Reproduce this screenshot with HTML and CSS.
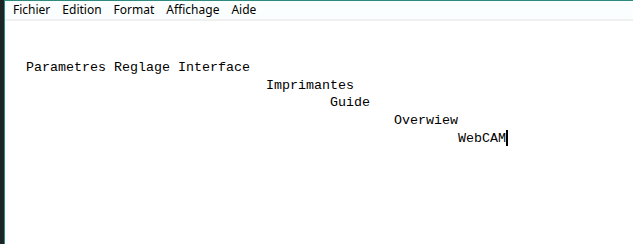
FILE: index.html
```html
<!DOCTYPE html>
<html lang="fr">
  <head>
    <meta charset="UTF-8" />
    <meta name="viewport" content="width=device-width, initial-scale=1.0" />
    <title>Sans titre - Bloc-notes</title>
    <link rel="stylesheet" href="styles.css">
  </head>
  <body>
    <div class="fenetre">
      <!-- Barre de menu -->
      <ul class="menu">
        <li>Fichier</li>
        <li>Edition</li>
        <li>Format</li>
        <li>Affichage</li>
        <li>Aide</li>
      </ul>

      <!-- Zone de texte -->
      <div class="editeur">
<pre class="texte">Parametres Reglage Interface
                              Imprimantes
                                      Guide
                                              Overwiew
                                                      WebCAM<span class="curseur"></span></pre>
      </div>
    </div>
  </body>
</html>
```

FILE: styles.css
```css
* {
  margin: 0;
  padding: 0;
  box-sizing: border-box;
}

body {
  background: #fff;
  height: 100vh;
  overflow: hidden;
}

.fenetre {
  height: 100%;
  border-left: 4px solid #1c2526; /* bande sombre a gauche */
  display: flex;
  flex-direction: column;
  position: relative;
}

.fenetre::before {
  content: "";
  position: absolute;
  top: 0;
  bottom: 0;
  left: 0;
  width: 1px;
  background: #2f8a80;
}

.menu {
  list-style: none;
  display: flex;
  height: 21px;
  padding-left: 3px;
  border-top: 1px solid #2f8a80;
  border-bottom: 2px solid #f0f0f0;
  background: #fbfefe;
  font-family: "Noto Sans", "Open Sans", sans-serif;
  font-size: 12px;
  line-height: 17px;
  color: #000;
}

.menu li {
  padding: 0 6px;
}

.editeur {
  flex: 1;
  padding: 38px 0 0 22px;
}

.texte {
  font-family: "Liberation Mono", "DejaVu Sans Mono", monospace;
  font-size: 13.33px;
  line-height: 17.7px;
  color: #000;
  white-space: pre;
}

.curseur {
  display: inline-block;
  width: 2px;
  height: 16px;
  background: #000;
  vertical-align: -4px;
}
```
